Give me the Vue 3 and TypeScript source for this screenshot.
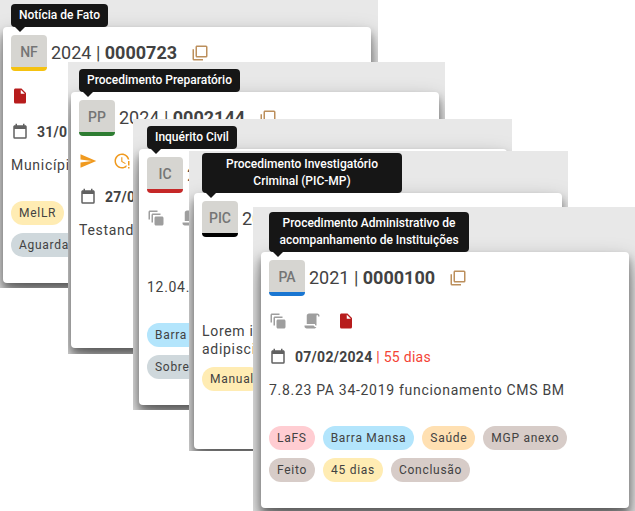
<script setup lang="ts">
interface Chip {
  label: string
  tone: 'yellow' | 'slate' | 'blue' | 'pink' | 'orange' | 'taupe'
}

interface CaseCard {
  kind: string
  name: string
  year: string
  number?: string
  icons: IconName[]
  date?: string
  remaining?: string
  description: string
  stacked?: boolean
  chips: Chip[]
}

type IconName = 'stack' | 'script' | 'file' | 'send' | 'clock'

const glyphs: Record<IconName | 'copy' | 'calendar', string> = {
  stack:
    'M4 2C2.89 2 2 2.89 2 4V14H4V4H14V2H4M8 6C6.89 6 6 6.89 6 8V18H8V8H18V6H8M12 10C10.89 10 10 10.89 10 12V20C10 21.11 10.89 22 12 22H20C21.11 22 22 21.11 22 20V12C22 10.89 21.11 10 20 10H12Z',
  script:
    'M17.8,20C17.4,21.2 16.3,22 15,22H5C3.3,22 2,20.7 2,19V18H5L14.2,18C14.6,19.2 15.7,20 17,20H17.8M19,2C20.7,2 22,3.3 22,5V6H20V5C20,4.4 19.6,4 19,4C18.4,4 18,4.4 18,5V18H17C16.4,18 16,17.6 16,17V16H5V5C5,3.3 6.3,2 8,2H19Z',
  file: 'M13,9V3.5L18.5,9M6,2C4.89,2 4,2.89 4,4V20A2,2 0 0,0 6,22H18A2,2 0 0,0 20,20V8L14,2H6Z',
  send: 'M2,21L23,12L2,3V10L17,12L2,14V21Z',
  clock:
    'M11 7V13L16.2 16.1L17 14.9L12.5 12.2V7H11M20 12V18H22V12H20M20 20V22H22V20H20M18 20C16.3 21.3 14.3 22 12 22C6.5 22 2 17.5 2 12S6.5 2 12 2C16.8 2 20.9 5.4 21.8 10H19.7C18.8 6.6 15.7 4 12 4C7.6 4 4 7.6 4 12S7.6 20 12 20C14.4 20 16.5 19 18 17.3V20Z',
  copy: 'M20,16V4H8V16H20M22,16A2,2 0 0,1 20,18H8C6.89,18 6,17.1 6,16V4C6,2.89 6.89,2 8,2H20A2,2 0 0,1 22,4V16M16,20V22H4A2,2 0 0,1 2,20V7H4V20H16Z',
  calendar:
    'M19,19H5V8H19M16,1V3H8V1H6V3H5C3.89,3 3,3.89 3,5V19A2,2 0 0,0 5,21H19A2,2 0 0,0 21,19V5C21,3.89 20.1,3 19,3H18V1',
}

const cards: CaseCard[] = [
  {
    kind: 'NF',
    name: 'Notícia de Fato',
    year: '2024',
    number: '0000723',
    icons: ['file'],
    date: '31/0',
    description: 'Municípi',
    stacked: true,
    chips: [
      { label: 'MelLR', tone: 'yellow' },
      { label: 'Aguardando', tone: 'slate' },
    ],
  },
  {
    kind: 'PP',
    name: 'Procedimento Preparatório',
    year: '2024',
    number: '0002144',
    icons: ['send', 'clock'],
    date: '27/0',
    description: 'Testand',
    chips: [],
  },
  {
    kind: 'IC',
    name: 'Inquérito Civil',
    year: '2',
    icons: ['stack', 'script'],
    description: '12.04.',
    stacked: true,
    chips: [
      { label: 'Barra Mansa', tone: 'blue' },
      { label: 'Sobrestado', tone: 'slate' },
    ],
  },
  {
    kind: 'PIC',
    name: 'Procedimento Investigatório Criminal (PIC-MP)',
    year: '20',
    icons: [],
    description: 'Lorem i\nadipisci',
    chips: [{ label: 'Manual', tone: 'yellow' }],
  },
  {
    kind: 'PA',
    name: 'Procedimento Administrativo de acompanhamento de Instituições',
    year: '2021',
    number: '0000100',
    icons: ['stack', 'script', 'file'],
    date: '07/02/2024',
    remaining: '55 dias',
    description: '7.8.23 PA 34-2019 funcionamento CMS BM',
    chips: [
      { label: 'LaFS', tone: 'pink' },
      { label: 'Barra Mansa', tone: 'blue' },
      { label: 'Saúde', tone: 'orange' },
      { label: 'MGP anexo', tone: 'taupe' },
      { label: 'Feito', tone: 'taupe' },
      { label: '45 dias', tone: 'yellow' },
      { label: 'Conclusão', tone: 'taupe' },
    ],
  },
]
</script>

<template>
  <main class="board">
    <section
      v-for="card in cards"
      :key="card.kind"
      class="panel"
      :class="`panel--${card.kind.toLowerCase()}`"
    >
      <article class="card">
        <div class="tooltip" role="tooltip">{{ card.name }}</div>
        <header class="head">
          <span class="badge">{{ card.kind }}</span>
          <h2 class="title">
            {{ card.year }}<template v-if="card.number"> | <strong>{{ card.number }}</strong></template>
          </h2>
          <button v-if="card.number" class="copy" type="button" aria-label="Copiar">
            <svg class="icon" viewBox="0 0 24 24"><path :d="glyphs.copy" /></svg>
          </button>
        </header>
        <div class="row icons">
          <svg
            v-for="icon in card.icons"
            :key="icon"
            class="icon"
            :class="`icon--${icon}`"
            viewBox="0 0 24 24"
          >
            <path :d="glyphs[icon]" />
          </svg>
        </div>
        <div class="row date">
          <template v-if="card.date">
            <svg class="icon" viewBox="0 0 24 24"><path :d="glyphs.calendar" /></svg>
            <p class="when">
              <strong>{{ card.date }}</strong>
              <span v-if="card.remaining" class="remaining"> | {{ card.remaining }}</span>
            </p>
          </template>
        </div>
        <p class="description">{{ card.description }}</p>
        <ul class="chips" :class="{ 'chips--stacked': card.stacked }">
          <li v-for="chip in card.chips" :key="chip.label" class="chip" :class="`chip--${chip.tone}`">
            {{ chip.label }}
          </li>
        </ul>
      </article>
    </section>
  </main>
</template>

<style>
body {
  margin: 0;
  background: #fff;
}
</style>

<style scoped>
.board {
  position: relative;
  min-height: 511px;
  overflow: hidden;
  font-family: Roboto, 'Liberation Sans', sans-serif;
  color: #424242;
}

/* Overlapping windows, each one clipping the shadow of its own card */
.panel {
  position: absolute;
  box-sizing: border-box;
  overflow: hidden;
  background: #e8e8e8;
}

.panel--nf {
  left: 0;
  top: 0;
  padding: 27px 7px 5px 3px;
  --accent: #f5c211;
}

.panel--pp {
  left: 68px;
  top: 62px;
  padding: 30px 6px 6px 3px;
  --accent: #2e7d32;
}

.panel--ic {
  left: 133px;
  top: 119px;
  padding: 30px 5px 5px 6px;
  --accent: #c62828;
}

.panel--pic {
  left: 189px;
  top: 151px;
  padding: 42px 6px 2px 5px;
  --accent: #000;
}

.panel--pa {
  left: 253px;
  top: 207px;
  padding: 45px 6px 3px 8px;
  --accent: #1976d2;
}

.card {
  position: relative;
  box-sizing: border-box;
  width: 368px;
  min-height: 256px;
  padding: 8px;
  border-radius: 4px;
  background: #fff;
  box-shadow:
    0 6px 8px rgba(0, 0, 0, 0.4),
    0 12px 24px rgba(0, 0, 0, 0.4);
}

.tooltip {
  position: absolute;
  left: 8px;
  bottom: 100%;
  box-sizing: border-box;
  width: max-content;
  max-width: 200px;
  padding: 3px 8px;
  border-radius: 4px;
  background: #161616;
  color: #fff;
  font-size: 12px;
  font-weight: 500;
  line-height: 17px;
  text-align: center;
}

.tooltip::after {
  content: '';
  position: absolute;
  left: 4px;
  top: 100%;
  border: 5px solid transparent;
  border-top-color: #161616;
  border-bottom-width: 0;
}

.head {
  display: flex;
  align-items: center;
  margin-bottom: 7px;
}

.badge {
  box-sizing: border-box;
  width: 36px;
  height: 36px;
  border-bottom: 4px solid var(--accent);
  border-radius: 4px;
  background: #d6d5d1;
  color: #757575;
  font-size: 14px;
  font-weight: 500;
  line-height: 34px;
  text-align: center;
}

.title {
  margin: 0 0 0 4px;
  font-size: 18px;
  font-weight: 400;
  line-height: 24px;
}

.copy {
  display: flex;
  margin: 0 0 0 14px;
  padding: 0;
  border: 0;
  background: none;
  color: #bc8f5c;
}

.icon {
  width: 18px;
  height: 18px;
  flex: none;
  fill: currentColor;
}

.row {
  display: flex;
  align-items: center;
  height: 36px;
}

.icons {
  gap: 16px;
  color: #9e9e9e;
}

.icon--file {
  color: #b71c1c;
}

.icon--send,
.icon--clock {
  color: #f09a1f;
}

.date {
  gap: 8px;
  color: #616161;
}

.when {
  margin: 0;
  color: #424242;
  font-size: 14px;
  line-height: 18px;
  letter-spacing: 0.02em;
}

.remaining {
  color: #f44336;
}

.description {
  min-height: 36px;
  margin: 6px 0 9px;
  font-size: 14px;
  line-height: 18px;
  letter-spacing: 0.05em;
  white-space: pre-line;
}

.chips {
  display: flex;
  flex-wrap: wrap;
  gap: 8px;
  margin: 0;
  padding: 0;
  list-style: none;
}

.chips--stacked {
  flex-direction: column;
  align-items: flex-start;
}

.chip {
  padding: 0 8px;
  border-radius: 12px;
  font-size: 12px;
  line-height: 24px;
  letter-spacing: 0.06em;
}

.chip--yellow {
  background: #ffecb3;
}

.chip--slate {
  background: #cfd8dc;
}

.chip--blue {
  background: #b3e5fc;
}

.chip--pink {
  background: #ffcdd2;
}

.chip--orange {
  background: #ffe0b2;
}

.chip--taupe {
  background: #d7ccc8;
}
</style>
